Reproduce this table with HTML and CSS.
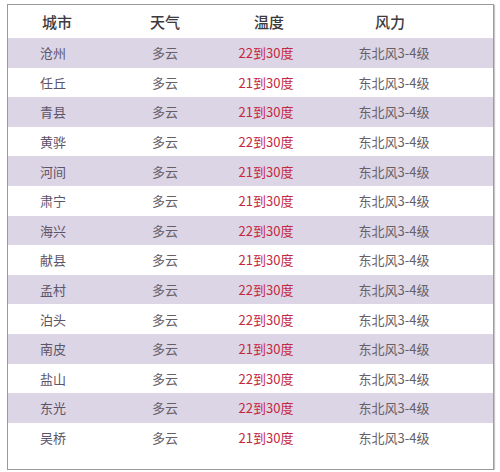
FILE: index.html
```html
<!DOCTYPE html>
<html lang="zh">
<head>
<meta charset="utf-8">
<link rel="stylesheet" href="styles.css">
</head>
<body>
<div class="frame">
  <div class="row head">
    <div class="c1">城市</div><div class="c2">天气</div><div class="c3">温度</div><div class="c4">风力</div>
  </div>
  <div class="row stripe"><div class="c1 city">沧州</div><div class="c2">多云</div><div class="c3 temp">22到30度</div><div class="c4">东北风3-4级</div></div>
  <div class="row"><div class="c1 city">任丘</div><div class="c2">多云</div><div class="c3 temp">21到30度</div><div class="c4">东北风3-4级</div></div>
  <div class="row stripe"><div class="c1 city">青县</div><div class="c2">多云</div><div class="c3 temp">21到30度</div><div class="c4">东北风3-4级</div></div>
  <div class="row"><div class="c1 city">黄骅</div><div class="c2">多云</div><div class="c3 temp">22到30度</div><div class="c4">东北风3-4级</div></div>
  <div class="row stripe"><div class="c1 city">河间</div><div class="c2">多云</div><div class="c3 temp">21到30度</div><div class="c4">东北风3-4级</div></div>
  <div class="row"><div class="c1 city">肃宁</div><div class="c2">多云</div><div class="c3 temp">21到30度</div><div class="c4">东北风3-4级</div></div>
  <div class="row stripe"><div class="c1 city">海兴</div><div class="c2">多云</div><div class="c3 temp">22到30度</div><div class="c4">东北风3-4级</div></div>
  <div class="row"><div class="c1 city">献县</div><div class="c2">多云</div><div class="c3 temp">21到30度</div><div class="c4">东北风3-4级</div></div>
  <div class="row stripe"><div class="c1 city">孟村</div><div class="c2">多云</div><div class="c3 temp">22到30度</div><div class="c4">东北风3-4级</div></div>
  <div class="row"><div class="c1 city">泊头</div><div class="c2">多云</div><div class="c3 temp">22到30度</div><div class="c4">东北风3-4级</div></div>
  <div class="row stripe"><div class="c1 city">南皮</div><div class="c2">多云</div><div class="c3 temp">21到30度</div><div class="c4">东北风3-4级</div></div>
  <div class="row"><div class="c1 city">盐山</div><div class="c2">多云</div><div class="c3 temp">22到30度</div><div class="c4">东北风3-4级</div></div>
  <div class="row stripe"><div class="c1 city">东光</div><div class="c2">多云</div><div class="c3 temp">22到30度</div><div class="c4">东北风3-4级</div></div>
  <div class="row"><div class="c1 city">吴桥</div><div class="c2">多云</div><div class="c3 temp">21到30度</div><div class="c4">东北风3-4级</div></div>
</div>
</body>
</html>
```
FILE: styles.css
```css
html, body {
  margin: 0;
  padding: 0;
  background: #ffffff;
}
body {
  font-family: "Noto Sans CJK SC", "Noto Sans", sans-serif;
  padding: 4px 0 0 7px;
}
.frame {
  width: 485px;
  height: 464px;
  border: 1px solid #9a9a9a;
  box-shadow: 1px 1px 1px #c8c8c8;
  background: #ffffff;
  box-sizing: content-box;
}
.row {
  display: grid;
  grid-template-columns: 90px 134px 68px 188px;
  height: 29.6px;
  align-items: center;
  font-size: 13px;
  color: #666066;
  line-height: 1;
}
.row > div {
  text-align: center;
}
.head {
  height: 33px;
  font-size: 15px;
  font-weight: 500;
  color: #3c3a3e;
}
.head .c1 {
  padding-left: 8px;
}
.head .c3 {
  padding-left: 6px;
}
.head .c4 {
  padding-right: 8px;
}
.stripe {
  background: #dcd5e6;
}
.city {
  color: #5c5468;
}
.temp {
  color: #c4283e;
}
```
